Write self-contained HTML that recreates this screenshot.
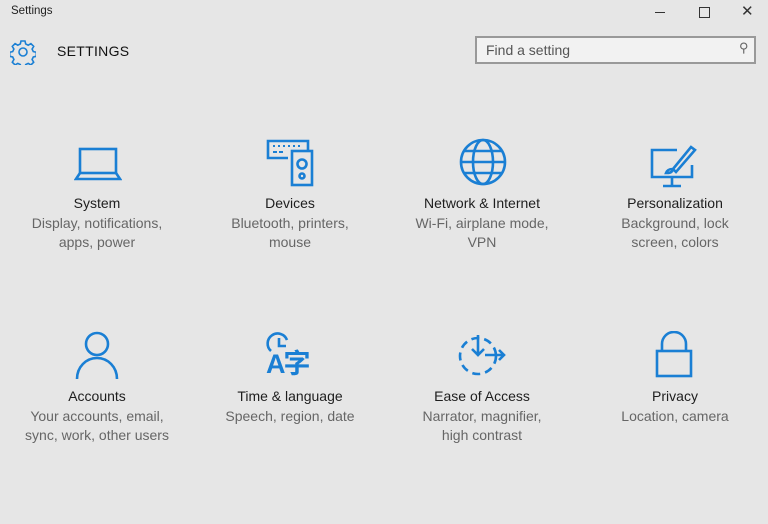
<!DOCTYPE html>
<html><head><meta charset="utf-8"><style>
body{margin:0;width:768px;height:524px;background:#e6e6e6;font-family:"Liberation Sans",sans-serif;position:relative;overflow:hidden}
.a{position:absolute}
.t{position:absolute;width:190px;text-align:center;font-size:14px;line-height:19.5px;color:#1e1e1e}
.t span{color:#666}
svg{position:absolute;fill:none;stroke:#1a7fd4;stroke-width:2.6}
</style></head><body>
<div class="a" style="left:11px;top:5px;font-size:11.5px;color:#222">Settings</div>
<div class="a" style="left:655px;top:12px;width:10px;height:1px;background:#333"></div>
<div class="a" style="left:699px;top:7px;width:9px;height:9px;border:1px solid #333"></div>
<div class="a" style="left:741px;top:2px;font-size:15px;color:#333">✕</div>
<svg style="left:10px;top:39px" width="26" height="26" viewBox="0 0 26 26"><g stroke-width="1.6"><circle cx="13" cy="13" r="4"/><path d="M11 2h4l.7 3 2.5 1.2 2.7-1.6 2.8 2.8-1.6 2.7 1.2 2.5 3 .7v4l-3 .7-1.2 2.5 1.6 2.7-2.8 2.8-2.7-1.6-2.5 1.2-.7 3h-4l-.7-3-2.5-1.2-2.7 1.6-2.8-2.8 1.6-2.7-1.2-2.5-3-.7v-4l3-.7 1.2-2.5-1.6-2.7 2.8-2.8 2.7 1.6 2.5-1.2z"/></g></svg>
<div class="a" style="left:57px;top:43px;font-size:14px;color:#111;letter-spacing:.3px">SETTINGS</div>
<div class="a" style="left:475px;top:36px;width:281px;height:28px;border:2px solid #999;box-sizing:border-box;background:#f2f2f2"></div>
<div class="a" style="left:486px;top:42px;font-size:14px;color:#555">Find a setting</div>
<div class="a" style="left:739px;top:40px;font-size:13px;color:#666;transform:scaleX(-1)">⚲</div>

<svg style="left:74px;top:146px" width="48" height="36" viewBox="0 0 48 36"><rect x="6" y="3" width="36" height="24"/><path d="M6 27L2 33H46L42 27"/></svg>
<svg style="left:265px;top:138px" width="50" height="50" viewBox="0 0 50 50"><path d="M23 20H3V3h40v9"/><path d="M8 8h2M13 8h2M18 8h2M23 8h2M28 8h2M33 8h2M8 14h4M14 14h4" stroke-width="2"/><rect x="27" y="13" width="20" height="34"/><circle cx="37" cy="26" r="4.5"/><circle cx="37" cy="38" r="2.5"/></svg>
<svg style="left:458px;top:138px" width="50" height="50" viewBox="0 0 50 50"><circle cx="25" cy="24" r="22"/><ellipse cx="25" cy="24" rx="10" ry="22"/><path d="M3 24h44M7 13h36M7 35h36"/></svg>
<svg style="left:649px;top:143px" width="50" height="46" viewBox="0 0 50 46"><path d="M28 7H3v27h40V22"/><path d="M23 34v8M14 43h18"/><path d="M24 26l18-22 4 3-19 22z M24 26c-4 0-6 1-7 4 3 0 6 0 7-4" /></svg>

<svg style="left:73px;top:330px" width="48" height="50" viewBox="0 0 48 50"><circle cx="24" cy="14" r="11"/><path d="M4 49c0-12 9-21 20-21s20 9 20 21"/></svg>
<svg style="left:264px;top:331px" width="52" height="48" viewBox="0 0 52 48"><path d="M7 20A10 10 0 1 1 23 9"/><path d="M15 7v8h7"/></svg>
<div class="a" style="left:266px;top:349px;font-size:27px;font-weight:bold;color:#1a7fd4;font-family:'Liberation Sans','Noto Sans CJK SC',sans-serif;line-height:30px;letter-spacing:-2px">A字</div>
<svg style="left:455px;top:332px" width="54" height="46" viewBox="0 0 54 46"><circle cx="23" cy="24" r="18" stroke-dasharray="8 5"/><path d="M23 3v20M17 17l6 6 6-6M30 23h19M44 18l5 5-5 5"/></svg>
<svg style="left:652px;top:331px" width="44" height="48" viewBox="0 0 44 48"><path d="M10 20V13a12 12 0 0 1 24 0v7"/><rect x="5" y="20" width="34" height="25"/></svg>

<div class="t" style="left:2px;top:194px">System<br><span>Display, notifications,<br>apps, power</span></div>
<div class="t" style="left:195px;top:194px">Devices<br><span>Bluetooth, printers,<br>mouse</span></div>
<div class="t" style="left:387px;top:194px">Network &amp; Internet<br><span>Wi-Fi, airplane mode,<br>VPN</span></div>
<div class="t" style="left:580px;top:194px">Personalization<br><span>Background, lock<br>screen, colors</span></div>
<div class="t" style="left:2px;top:387px">Accounts<br><span>Your accounts, email,<br>sync, work, other users</span></div>
<div class="t" style="left:195px;top:387px">Time &amp; language<br><span>Speech, region, date</span></div>
<div class="t" style="left:387px;top:387px">Ease of Access<br><span>Narrator, magnifier,<br>high contrast</span></div>
<div class="t" style="left:580px;top:387px">Privacy<br><span>Location, camera</span></div>
</body></html>
